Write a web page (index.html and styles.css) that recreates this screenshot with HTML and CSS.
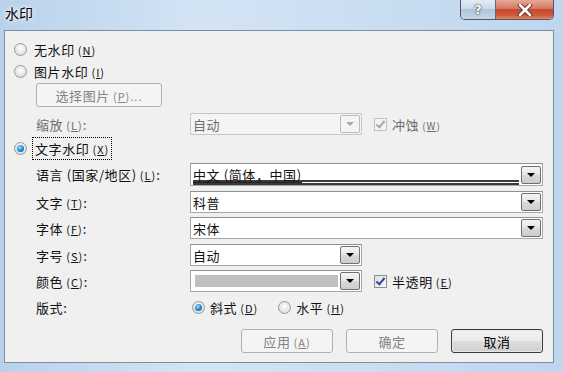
FILE: index.html
```html
<!DOCTYPE html>
<html lang="zh-CN">
<head>
  <meta charset="UTF-8">
  <title>水印</title>
  <link rel="stylesheet" href="styles.css">
</head>
<body>
  <div class="window">
    <div class="titlebar">
      <span class="title">水印</span>
      <div class="caption">
        <span class="cap help">?</span>
        <span class="cap close">
          <svg width="16" height="12" viewBox="0 0 16 12">
            <path d="M3 1 L13 11 M13 1 L3 11" stroke="#5a2a22" stroke-width="4.5" stroke-linecap="round"/>
            <path d="M3 1 L13 11 M13 1 L3 11" stroke="#fff" stroke-width="2.6" stroke-linecap="round"/>
          </svg>
        </span>
      </div>
    </div>

    <div class="client">
      <!-- watermark type -->
      <div class="radio-row r-none">
        <span class="radio"></span>
        <span class="lbl">无水印<span class="mn">(<u>N</u>)</span></span>
      </div>
      <div class="radio-row r-pic">
        <span class="radio"></span>
        <span class="lbl">图片水印<span class="mn">(<u>I</u>)</span></span>
      </div>
      <div class="pic-row">
        <button class="btn disabled pick">选择图片<span class="mn">(<u>P</u>)...</span></button>
      </div>
      <div class="form-row r-scale">
        <span class="flabel disabled-text">缩放<span class="mn">(<u>L</u>)</span>:</span>
        <div class="combo short disabled">
          <span class="value">自动</span>
          <span class="drop"><span class="arrow"></span></span>
        </div>
        <span class="check disabled checked"></span>
        <span class="check-lbl disabled-text">冲蚀<span class="mn small">(<u>W</u>)</span></span>
      </div>
      <div class="radio-row r-text">
        <span class="radio on"></span>
        <span class="lbl focus">文字水印<span class="mn">(<u>X</u>)</span></span>
      </div>

      <!-- text watermark options -->
      <div class="form-row r-lang">
        <span class="flabel">语言 (国家/地区)<span class="mn">(<u>L</u>)</span>:</span>
        <div class="combo wide lang">
          <span class="value"><span class="uline">中文 (简体，中国)</span></span>
          <span class="drop"><span class="arrow"></span></span>
        </div>
      </div>
      <div class="form-row r-text2">
        <span class="flabel">文字<span class="mn">(<u>T</u>)</span>:</span>
        <div class="combo wide">
          <span class="value">科普</span>
          <span class="drop"><span class="arrow"></span></span>
        </div>
      </div>
      <div class="form-row r-font">
        <span class="flabel">字体<span class="mn">(<u>F</u>)</span>:</span>
        <div class="combo wide">
          <span class="value">宋体</span>
          <span class="drop"><span class="arrow"></span></span>
        </div>
      </div>
      <div class="form-row r-size">
        <span class="flabel">字号<span class="mn">(<u>S</u>)</span>:</span>
        <div class="combo short">
          <span class="value">自动</span>
          <span class="drop"><span class="arrow"></span></span>
        </div>
      </div>
      <div class="form-row r-color">
        <span class="flabel">颜色<span class="mn">(<u>C</u>)</span>:</span>
        <div class="combo short">
          <span class="value"><span class="swatch"></span></span>
          <span class="drop"><span class="arrow"></span></span>
        </div>
        <span class="check checked"></span>
        <span class="check-lbl">半透明<span class="mn">(<u>E</u>)</span></span>
      </div>
      <div class="form-row r-layout">
        <span class="flabel">版式:</span>
        <div class="layout-opts">
          <span class="radio on"></span>
          <span class="lbl first">斜式<span class="mn">(<u>D</u>)</span></span>
          <span class="radio"></span>
          <span class="lbl">水平<span class="mn">(<u>H</u>)</span></span>
        </div>
      </div>

      <div class="actions">
        <button class="btn disabled">应用<span class="mn">(<u>A</u>)</span></button>
        <button class="btn disabled">确定</button>
        <button class="btn default">取消</button>
      </div>
    </div>
  </div>
</body>
</html>
```

FILE: styles.css
```css
* {
  margin: 0;
  padding: 0;
  box-sizing: border-box;
}

body {
  width: 563px;
  height: 372px;
  overflow: hidden;
  font-family: "Noto Sans CJK SC", "Noto Sans", sans-serif;
  font-size: 13px;
  color: #111;
}

.window {
  width: 563px;
  height: 372px;
  display: flex;
  flex-direction: column;
  background: linear-gradient(90deg, #b9d2ea 0%, #d3e4f5 35%, #c9ddf1 70%, #bed6ee 100%);
}

/* title bar */
.titlebar {
  height: 30px;
  display: flex;
  align-items: flex-start;
  justify-content: space-between;
  padding-left: 5px;
  padding-right: 9px;
}

.title {
  margin-top: 3px;
  font-size: 14px;
  color: #000;
  text-shadow: 0 0 6px #fff, 0 0 3px #fff;
}

.caption {
  display: flex;
  height: 20px;
  border: 1px solid #4a5869;
  border-top: none;
  border-radius: 0 0 5px 5px;
  overflow: hidden;
}

.cap {
  display: flex;
  align-items: center;
  justify-content: center;
}

.help {
  width: 35px;
  border-right: 1px solid #5d6b7c;
  background: linear-gradient(180deg, #e3ecf6 0%, #cbd9e8 45%, #b2c4d8 50%, #c4d6e8 100%);
  color: #fff;
  font-family: "DejaVu Sans", sans-serif;
  font-weight: bold;
  font-size: 13px;
  text-shadow: 0 0 1px #333, 0 0 2px #333;
}

.close {
  width: 57px;
  background: linear-gradient(180deg, #e8a897 0%, #d47a64 45%, #c44a30 50%, #d0583a 80%, #e08a6c 100%);
}

/* client area */
.client {
  margin-left: 4px;
  width: 550px;
  height: 333px;
  border: 1px solid #7d8da1;
  background: #f0f0f0;
  padding: 8px 10px 0 0;
  display: flex;
  flex-direction: column;
}

.mn {
  font-size: 11px;
  margin-left: 3px;
  letter-spacing: 1px;
}

.mn.small {
  font-size: 10px;
}

.lbl, .flabel, .check-lbl {
  letter-spacing: 0.6px;
  white-space: nowrap;
}

.disabled-text {
  color: #6d6d6d;
}

/* radio buttons */
.radio-row {
  display: flex;
  align-items: center;
  height: 20px;
  padding-left: 9px;
  gap: 7px;
}

.r-pic { margin-top: 2px; }
.r-text { margin-top: 3px; }

.radio {
  width: 13px;
  height: 13px;
  flex: none;
  border-radius: 50%;
  border: 1px solid #9a9a9a;
  background: radial-gradient(circle at 50% 40%, #ffffff 0%, #e6e6e6 55%, #cfcfcf 100%);
  display: flex;
  align-items: center;
  justify-content: center;
}

.radio.on::after {
  content: "";
  width: 7px;
  height: 7px;
  border-radius: 50%;
  background: radial-gradient(circle at 40% 35%, #9ee0ff 0%, #2a8ad4 50%, #0d4f8c 100%);
}

.focus {
  outline: 1px dotted #000;
  outline-offset: 1px;
  padding: 0 1px;
}

/* picture button row */
.pic-row {
  margin-top: 2px;
  padding-left: 31px;
  height: 24px;
}

.pick {
  width: 126px;
  height: 24px;
}

/* form rows */
.form-row {
  display: flex;
  align-items: center;
  height: 22px;
  padding-left: 31px;
}

.r-scale { margin-top: 6px; }
.r-lang { margin-top: 5px; height: 23px; }
.r-text2 { margin-top: 5px; }
.r-font { margin-top: 4px; }
.r-size { margin-top: 5px; }
.r-color { margin-top: 4px; }
.r-layout { margin-top: 5px; height: 20px; }

.flabel {
  width: 154px;
  flex: none;
}

.combo {
  height: 100%;
  display: flex;
  align-items: center;
  border: 1px solid #a5a7ab;
  border-top-color: #8e9095;
  background: #fff;
  padding-left: 2px;
  padding-right: 1px;
}

.combo.wide { width: 354px; }
.combo.short { width: 172px; }

.combo .value {
  flex: 1;
  letter-spacing: 0.6px;
  white-space: nowrap;
}

.combo.disabled {
  background: #f4f4f4;
  border-color: #c6c6c6;
  color: #6d6d6d;
}

.drop {
  width: 20px;
  height: 18px;
  border: 1px solid #707070;
  border-radius: 2px;
  background: linear-gradient(180deg, #f4f4f4 0%, #e6e6e6 48%, #d9d9d9 52%, #cdcdcd 100%);
  display: flex;
  align-items: center;
  justify-content: center;
}

.arrow {
  width: 0;
  height: 0;
  border-left: 4px solid transparent;
  border-right: 4px solid transparent;
  border-top: 4px solid #000;
}

.combo.disabled .drop {
  border-color: #bcbcbc;
  background: #f4f4f4;
}

.combo.disabled .arrow {
  border-top-color: #a8a8a8;
}

.lang .value {
  align-self: flex-start;
  margin-top: 1px;
  margin-right: 2px;
  height: 20px;
  border-bottom: 5px double #3a3a3a;
}

.uline {
  display: inline-block;
  height: 15px;
  line-height: 14px;
  border-bottom: 1px solid #222;
}

.swatch {
  display: block;
  width: 143px;
  height: 12px;
  margin-left: 2px;
  background: #c0c0c0;
}

/* check boxes */
.check {
  width: 13px;
  height: 13px;
  flex: none;
  margin-left: 12px;
  margin-right: 5px;
  border: 1px solid #8f8f8f;
  background: linear-gradient(135deg, #e0e0e0 0%, #f8f8f8 100%);
  display: flex;
  align-items: center;
  justify-content: center;
}

.check.checked::after {
  content: "";
  width: 3px;
  height: 7px;
  margin-top: -2px;
  border-right: 2px solid #30489a;
  border-bottom: 2px solid #30489a;
  transform: rotate(40deg);
}

.check.disabled {
  border-color: #c0c0c0;
  background: #f4f4f4;
}

.check.disabled::after {
  border-color: #a8a8a8;
}

/* layout radios */
.layout-opts {
  display: flex;
  align-items: center;
  padding-left: 2px;
  gap: 5px;
}

.layout-opts .first {
  margin-right: 15px;
}

/* buttons */
.btn {
  font-family: inherit;
  font-size: 13px;
  letter-spacing: 0.6px;
  height: 24px;
  border: 1px solid #707070;
  border-radius: 3px;
  background: linear-gradient(180deg, #f2f2f2 0%, #ebebeb 48%, #dddddd 52%, #cfcfcf 100%);
  color: #000;
}

.btn.disabled {
  border-color: #adb2b5;
  background: #f4f4f4;
  color: #838383;
}

.btn.default {
  border-color: #3c3c3c;
  box-shadow: inset 0 0 0 1px #e8e8e8;
}

.actions {
  margin-top: 12px;
  display: flex;
  justify-content: flex-end;
  gap: 13px;
}

.actions .btn {
  width: 92px;
}
```
